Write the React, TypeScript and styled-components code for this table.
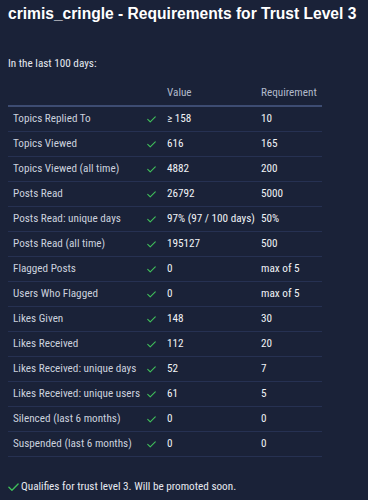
import React from "react";
import styled, { createGlobalStyle } from "styled-components";

const Global = createGlobalStyle`
  html, body { margin: 0; padding: 0; background: #1a2238; }
  body { font-family: "Roboto Condensed", Lato, "Noto Sans", sans-serif; color: #dde2ec; }
`;

const Page = styled.div`
  padding: 4px 8px 0 8px;
  width: 352px;
  height: 496px;
  overflow: hidden;
`;

const Title = styled.h1`
  margin: 0;
  font-family: "Liberation Sans", Arial, sans-serif;
  font-weight: bold;
  font-size: 15.6px;
  line-height: 20px;
  color: #ffffff;
  white-space: nowrap;
`;

const Intro = styled.p`
  margin: 32px 0 0 0;
  font-size: 11.2px;
  line-height: 16px;
  color: #e6e9f0;
`;

const Table = styled.table`
  margin-top: 13px;
  width: 314px;
  border-collapse: collapse;
  table-layout: fixed;
  font-size: 11.2px;
`;

const HeadCell = styled.th`
  text-align: left;
  font-weight: normal;
  color: #b2bacb;
  padding: 0 0 4px 0;
  height: 16px;
  line-height: 16px;
  border-bottom: 2px solid #3d4c72;
`;

const Row = styled.tr`
  border-bottom: 1px solid #263152;
`;

const Cell = styled.td`
  height: 23px;
  padding: 0;
  line-height: 16px;
  color: #f0f2f6;
  white-space: nowrap;
`;

const LabelCell = styled(Cell)`
  padding-left: 5px;
  color: #cbd1de;
`;

const IconCell = styled(Cell)`
  padding-top: 1px;
`;

const Footer = styled.div`
  margin-top: 22px;
  display: flex;
  align-items: center;
  gap: 2px;
  font-size: 11.2px;
  line-height: 16px;
  color: #e6e9f0;
`;

const Check = ({ w = 9 }: { w?: number }) => (
  <svg width={w} height={w * 0.75} viewBox="0 0 12 9" fill="none" style={{ display: "block" }}>
    <path d="M1 4.6 L4.3 7.8 L11 1.2" stroke="#3fbf5a" strokeWidth="1.5" strokeLinecap="round" strokeLinejoin="round" />
  </svg>
);

const rows: [string, string, string][] = [
  ["Topics Replied To", "≥ 158", "10"],
  ["Topics Viewed", "616", "165"],
  ["Topics Viewed (all time)", "4882", "200"],
  ["Posts Read", "26792", "5000"],
  ["Posts Read: unique days", "97% (97 / 100 days)", "50%"],
  ["Posts Read (all time)", "195127", "500"],
  ["Flagged Posts", "0", "max of 5"],
  ["Users Who Flagged", "0", "max of 5"],
  ["Likes Given", "148", "30"],
  ["Likes Received", "112", "20"],
  ["Likes Received: unique days", "52", "7"],
  ["Likes Received: unique users", "61", "5"],
  ["Silenced (last 6 months)", "0", "0"],
  ["Suspended (last 6 months)", "0", "0"],
];

export default function App() {
  return (
    <Page>
      <Global />
      <Title>crimis_cringle - Requirements for Trust Level 3</Title>
      <Intro>In the last 100 days:</Intro>
      <Table>
        <colgroup>
          <col style={{ width: 139 }} />
          <col style={{ width: 20 }} />
          <col style={{ width: 94 }} />
          <col style={{ width: 61 }} />
        </colgroup>
        <thead>
          <tr>
            <HeadCell />
            <HeadCell />
            <HeadCell>Value</HeadCell>
            <HeadCell>Requirement</HeadCell>
          </tr>
        </thead>
        <tbody>
          {rows.map(([label, value, req]) => (
            <Row key={label}>
              <LabelCell>{label}</LabelCell>
              <IconCell>
                <Check />
              </IconCell>
              <Cell>{value}</Cell>
              <Cell>{req}</Cell>
            </Row>
          ))}
        </tbody>
      </Table>
      <Footer>
        <Check w={11} />
        <span>Qualifies for trust level 3. Will be promoted soon.</span>
      </Footer>
    </Page>
  );
}
